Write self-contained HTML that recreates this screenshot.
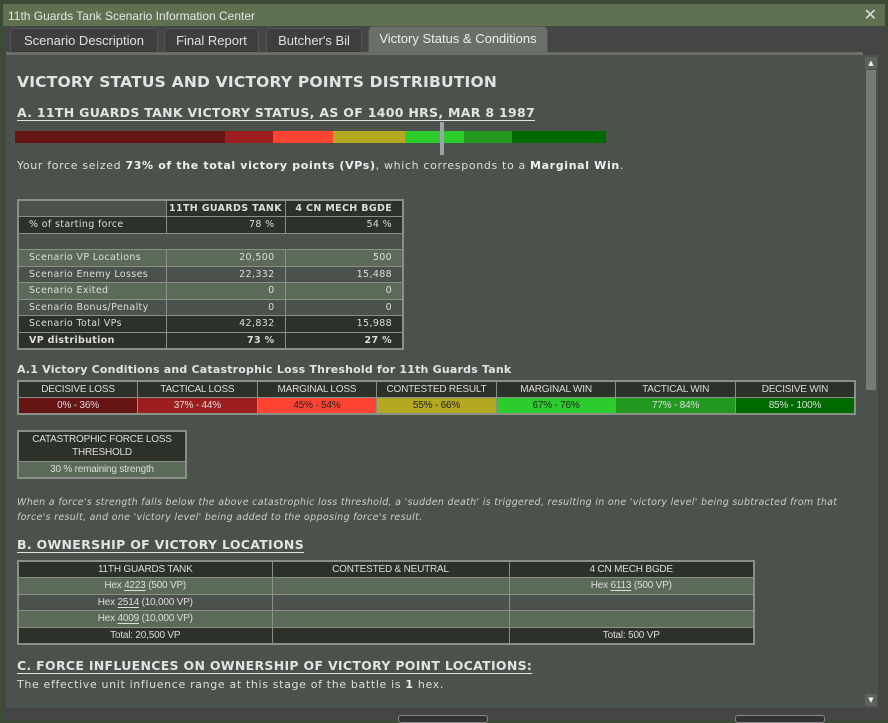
<!DOCTYPE html>
<html><head><meta charset="utf-8"><style>
*{box-sizing:border-box;margin:0;padding:0}
body{width:888px;height:720px;overflow:hidden;background:#3d4a35;font-family:"DejaVu Sans","Liberation Sans",sans-serif;position:relative}
.win{position:absolute;left:3px;top:4px;width:882px;height:716px;background:#454545;border-radius:4px 4px 0 0}
.title{position:absolute;left:0;top:0;width:882px;height:22px;background:#5f7150;color:#e6e6e6;font:12px "Liberation Sans",sans-serif;padding:5px 5px}
.x{position:absolute;right:8px;top:1px;color:#ddd;font-size:16px}
.tab{position:absolute;top:28px;height:25px;background:#3e3e3e;border:1px solid #555;border-bottom:none;border-radius:5px 5px 0 0;color:#e0e0e0;font:13px "Liberation Sans",sans-serif;text-align:center;line-height:24px}
.tab.a{background:#6a7068;top:26px;height:27px;color:#eee}
.panel{position:absolute;left:6px;top:52px;width:857px;height:656px;background:#4b524b;border-top:3px solid #6a7068;color:#ddd;overflow:hidden}
.sb{position:absolute;left:863px;top:55px;width:15px;height:653px;background:#4b524b}
.thumb{position:absolute;left:866px;top:70px;width:10px;height:320px;background:#777b76}
.ar{position:absolute;left:865px;width:12px;height:12px;background:#5e625d;color:#eee;font-size:7px;text-align:center;line-height:12px}
.ab{position:absolute;white-space:nowrap}
h1{position:absolute;left:11px;top:18px;font-size:15.5px;letter-spacing:.2px;color:#e3e3e3;font-weight:bold}
.h2{font-size:12.5px;letter-spacing:.3px;font-weight:bold;color:#e3e3e3;text-decoration:underline;text-underline-offset:3px}
.txt{font-size:11px;letter-spacing:.65px;color:#ddd}
table{border-collapse:collapse;position:absolute;border:2px solid #8a8f88;table-layout:fixed}
td{border:1px solid #8a8f88;font-size:9.5px;letter-spacing:.35px;color:#ddd;padding:0 10px;height:16.5px;white-space:nowrap;overflow:hidden;line-height:15px}
.d{background:#2c3129}.l{background:#5c6b59}.m{background:#4b524b}
.n{font-family:"Liberation Sans",sans-serif;font-size:10px;letter-spacing:-.2px;text-align:center;padding:0}
b{color:#f0f0f0}
u{text-underline-offset:2px}
</style></head><body>
<div class="win">
<div class="title">11th Guards Tank Scenario Information Center<span class="x">✕</span></div>
</div>
<div class="tab" style="left:10px;width:148px">Scenario Description</div>
<div class="tab" style="left:164px;width:95px">Final Report</div>
<div class="tab" style="left:266px;width:96px">Butcher's Bil</div>
<div class="tab a" style="left:368px;width:180px">Victory Status &amp; Conditions</div>
<div class="panel">
<h1>VICTORY STATUS AND VICTORY POINTS DISTRIBUTION</h1>
<div class="ab h2" style="left:11px;top:50px">A. 11TH GUARDS TANK VICTORY STATUS, AS OF 1400 HRS, MAR 8 1987</div>
<div class="ab" style="left:9px;top:76px;width:591px;height:12px;display:flex">
<div style="width:210px;background:#661414"></div><div style="width:48px;background:#9c1e1e"></div><div style="width:60px;background:#ff4433"></div><div style="width:72px;background:#b4a822"></div><div style="width:59px;background:#2dcc2d"></div><div style="width:48px;background:#23991f"></div><div style="width:94px;background:#006a00"></div></div>
<div class="ab" style="left:434px;top:67px;width:4px;height:33px;background:#9aa3a6"></div>
<div class="ab txt" style="left:11px;top:104px">Your force seized <b>73% of the total victory points (VPs)</b>, which corresponds to a <b>Marginal Win</b>.</div>
<table style="left:11px;top:144px;width:387px">
<colgroup><col style="width:148px"><col style="width:119px"><col></colgroup>
<tr class="d"><td class="m"></td><td style="text-align:center;font-weight:bold;padding:0">11TH GUARDS TANK</td><td style="text-align:center;font-weight:bold;padding:0">4 CN MECH BGDE</td></tr>
<tr class="d"><td>% of starting force</td><td style="text-align:right">78 %</td><td style="text-align:right">54 %</td></tr>
<tr class="m"><td colspan="3"></td></tr>
<tr class="l"><td>Scenario VP Locations</td><td style="text-align:right">20,500</td><td style="text-align:right">500</td></tr>
<tr class="m"><td>Scenario Enemy Losses</td><td style="text-align:right">22,332</td><td style="text-align:right">15,488</td></tr>
<tr class="l"><td>Scenario Exited</td><td style="text-align:right">0</td><td style="text-align:right">0</td></tr>
<tr class="m"><td>Scenario Bonus/Penalty</td><td style="text-align:right">0</td><td style="text-align:right">0</td></tr>
<tr class="d"><td>Scenario Total VPs</td><td style="text-align:right">42,832</td><td style="text-align:right">15,988</td></tr>
<tr class="d"><td style="font-weight:bold">VP distribution</td><td style="text-align:right;font-weight:bold">73 %</td><td style="text-align:right;font-weight:bold">27 %</td></tr>
</table>
<div class="ab" style="left:11px;top:308px;font-size:11px;letter-spacing:.2px;font-weight:bold;color:#e3e3e3">A.1 Victory Conditions and Catastrophic Loss Threshold for 11th Guards Tank</div>
<table style="left:11px;top:325px;width:839px">
<tr class="d"><td class="n">DECISIVE LOSS</td><td class="n">TACTICAL LOSS</td><td class="n">MARGINAL LOSS</td><td class="n">CONTESTED RESULT</td><td class="n">MARGINAL WIN</td><td class="n">TACTICAL WIN</td><td class="n">DECISIVE WIN</td></tr>
<tr><td class="n" style="background:#661414">0% - 36%</td><td class="n" style="background:#9c1e1e">37% - 44%</td><td class="n" style="background:#ff4433;color:#222">45% - 54%</td><td class="n" style="background:#b4a822;color:#222">55% - 66%</td><td class="n" style="background:#2dcc2d;color:#222">67% - 76%</td><td class="n" style="background:#23991f">77% - 84%</td><td class="n" style="background:#006a00">85% - 100%</td></tr>
</table>
<table style="left:11px;top:375px;width:170px">
<tr class="d"><td class="n" style="height:30px;line-height:13px;white-space:normal">CATASTROPHIC FORCE LOSS<br>THRESHOLD</td></tr>
<tr class="l"><td class="n">30 % remaining strength</td></tr>
</table>
<div class="ab" style="left:11px;top:440px;font-size:9.5px;font-style:italic;letter-spacing:.3px;color:#ccc;line-height:15px;white-space:normal;width:845px">When a force's strength falls below the above catastrophic loss threshold, a 'sudden death' is triggered, resulting in one 'victory level' being subtracted from that force's result, and one 'victory level' being added to the opposing force's result.</div>
<div class="ab h2" style="left:11px;top:482px">B. OWNERSHIP OF VICTORY LOCATIONS</div>
<table style="left:11px;top:505px;width:738px">
<colgroup><col style="width:254px"><col style="width:237px"><col></colgroup>
<tr class="d"><td class="n">11TH GUARDS TANK</td><td class="n">CONTESTED &amp; NEUTRAL</td><td class="n">4 CN MECH BGDE</td></tr>
<tr class="l"><td class="n">Hex <u>4223</u> (500 VP)</td><td></td><td class="n">Hex <u>6113</u> (500 VP)</td></tr>
<tr class="m"><td class="n">Hex <u>2514</u> (10,000 VP)</td><td></td><td></td></tr>
<tr class="l"><td class="n">Hex <u>4009</u> (10,000 VP)</td><td></td><td></td></tr>
<tr class="d"><td class="n">Total: 20,500 VP</td><td></td><td class="n">Total: 500 VP</td></tr>
</table>
<div class="ab h2" style="left:11px;top:603px">C. FORCE INFLUENCES ON OWNERSHIP OF VICTORY POINT LOCATIONS:</div>
<div class="ab txt" style="left:11px;top:623px">The effective unit influence range at this stage of the battle is <b>1</b> hex.</div>
</div>
<div class="sb"></div><div class="thumb"></div>
<div class="ar" style="top:57px">▲</div><div class="ar" style="top:694px">▼</div>
<div class="ab" style="left:398px;top:715px;width:90px;height:8px;border:1px solid #888;border-radius:3px;background:#333"></div>
<div class="ab" style="left:735px;top:715px;width:90px;height:8px;border:1px solid #888;border-radius:3px;background:#333"></div>
</body></html>
